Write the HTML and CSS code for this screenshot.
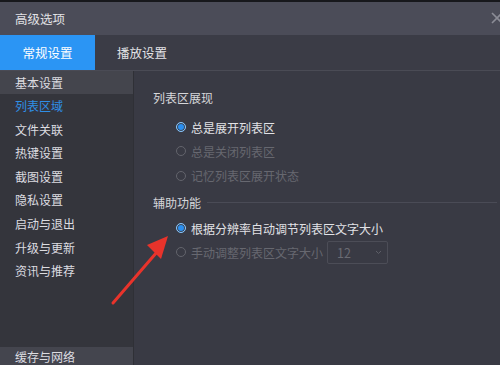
FILE: index.html
```html
<!DOCTYPE html>
<html lang="zh-CN">
<head>
<meta charset="utf-8">
<title>高级选项</title>
<link rel="stylesheet" href="styles.css">
</head>
<body>
<div class="win">
  <header class="titlebar">
    <span class="title">高级选项</span>
    <svg class="close" width="12" height="12" viewBox="0 0 12 12"><path d="M1 1L11 11M11 1L1 11" stroke="#8b8c96" stroke-width="1.6" fill="none"/></svg>
  </header>
  <nav class="tabs">
    <div class="tab active">常规设置</div>
    <div class="tab">播放设置</div>
  </nav>
  <div class="main">
    <aside class="side">
      <div class="item hl">基本设置</div>
      <div class="item cur">列表区域</div>
      <div class="item">文件关联</div>
      <div class="item">热键设置</div>
      <div class="item">截图设置</div>
      <div class="item">隐私设置</div>
      <div class="item">启动与退出</div>
      <div class="item">升级与更新</div>
      <div class="item">资讯与推荐</div>
      <div class="item bottom">缓存与网络</div>
    </aside>
    <section class="content">
      <div class="group-title">列表区展现</div>
      <div class="radios first">
        <div class="radio on"><span class="dot"></span>总是展开列表区</div>
        <div class="radio off"><span class="dot"></span>总是关闭列表区</div>
        <div class="radio off"><span class="dot"></span>记忆列表区展开状态</div>
      </div>
      <div class="group-title line">辅助功能</div>
      <div class="radios">
        <div class="radio on"><span class="dot"></span>根据分辨率自动调节列表区文字大小</div>
        <div class="radio off"><span class="dot"></span>手动调整列表区文字大小
          <div class="select"><span>12</span><svg width="7" height="5" viewBox="0 0 7 5"><path d="M1 1L3.5 3.5L6 1" stroke="#5d5e67" stroke-width="1" fill="none"/></svg></div>
        </div>
      </div>
    </section>
  </div>
  <svg class="arrow" width="80" height="80" viewBox="0 0 80 80">
    <path d="M3 73L47 22" stroke="#e8332b" stroke-width="3" stroke-linecap="round"/>
    <path d="M58 6L37 15L51 29Z" fill="#e8332b"/>
  </svg>
</div>
</body>
</html>
```
FILE: styles.css
```css
* { box-sizing: border-box; }
html, body { margin: 0; padding: 0; }
body {
  width: 500px;
  height: 365px;
  overflow: hidden;
  background: #393a44;
  font-family: "Noto Sans CJK SC", "Noto Sans", sans-serif;
  font-size: 12px;
  color: #dedee2;
}
.win {
  position: relative;
  width: 500px;
  height: 365px;
  display: flex;
  flex-direction: column;
  border-top: 2px solid #17181c;
}
.titlebar {
  height: 33px;
  flex: none;
  background: #4b4c58;
  display: flex;
  align-items: center;
  justify-content: space-between;
  padding: 0 0 0 15px;
}
.title { font-size: 12.5px; color: #e2e2e6; }
.close { margin-right: -3px; margin-top: -2px; }
.tabs {
  height: 36px;
  flex: none;
  background: #3b3c46;
  display: flex;
  border-bottom: 1px solid #4a4b55;
}
.tab {
  height: 35px;
  display: flex;
  align-items: center;
  font-size: 12.5px;
  color: #e4e4e8;
  padding: 0 22px;
}
.tab.active {
  width: 95px;
  justify-content: center;
  background: #2b95f4;
  color: #fff;
  padding: 0;
}
.main {
  flex: 1;
  display: flex;
  min-height: 0;
}
.side {
  width: 134px;
  flex: none;
  background: #34353c;
  border-right: 1px solid #2f3036;
  display: flex;
  flex-direction: column;
}
.item {
  height: 23.6px;
  line-height: 23.6px;
  padding-left: 15px;
  color: #dcdce0;
  flex: none;
}
.item.hl { background: #44454d; height: 23px; line-height: 23px; }
.item.cur { color: #2f8fe6; }
.item.bottom {
  margin-top: auto;
  height: 18px;
  line-height: 20px;
  background: #44454e;
}
.content {
  flex: 1;
  background: #393a44;
  padding: 17px 3px 0 19px;
}
.group-title {
  height: 20px;
  line-height: 20px;
  color: #d6d6da;
  display: flex;
  align-items: center;
}
.group-title.line::after {
  content: "";
  flex: 1;
  height: 1px;
  background: #4a4b56;
  margin-left: 6px;
  margin-top: -1px;
}
.radios { padding-left: 23px; margin: 3px 0 5px; }
.radios.first { margin-top: 7px; }
.radio {
  height: 24.3px;
  display: flex;
  align-items: center;
  color: #e2e2e6;
}
.radio.off { color: #676870; }
.dot {
  width: 10px;
  height: 10px;
  border-radius: 50%;
  border: 1px solid #63646c;
  margin-right: 5px;
  flex: none;
}
.radio.on .dot {
  border: 1.5px solid #8fc6f7;
  background: #2b8ff0;
  box-shadow: inset 0 0 0 1px #39404d;
}
.select {
  width: 61px;
  height: 23px;
  border: 1px solid #4c4d57;
  border-radius: 2px;
  margin-left: 4px;
  display: flex;
  align-items: center;
  justify-content: space-between;
  padding: 0 5px 0 9px;
  color: #6a6b73;
  font-size: 12.5px;
}
.arrow {
  position: absolute;
  left: 110px;
  top: 228px;
}
```
